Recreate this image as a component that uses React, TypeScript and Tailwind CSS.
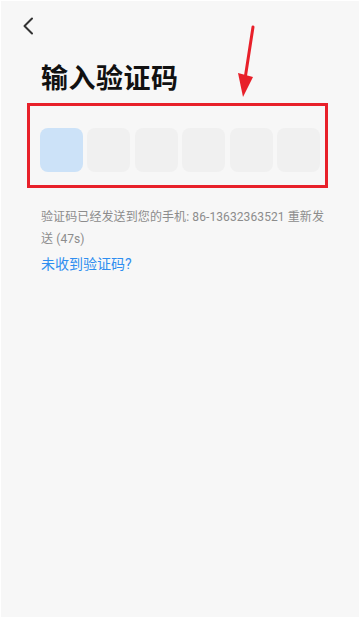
import React from "react";

export default function App() {
  const boxes = [0, 1, 2, 3, 4, 5];
  return (
    <div className="w-[360px] h-[618px] bg-white p-px" style={{ fontFamily: 'Roboto, "Noto Sans CJK SC", "Noto Sans", sans-serif' }}>
      <div className="relative w-full h-full bg-[#f7f7f7] overflow-hidden">
        <div className="h-[60px] pl-[21px] pt-[16px]">
          <svg width="12" height="18" viewBox="0 0 12 18" fill="none">
            <path d="M10 1.5 L2.5 9 L10 16.5" stroke="#333" strokeWidth="2" strokeLinecap="round" strokeLinejoin="round" />
          </svg>
        </div>
        <h1 className="ml-[40px] text-[27px] leading-[36px] font-bold text-[#111] tracking-[0.5px]">输入验证码</h1>
        <div className="ml-[26px] mt-[6px] w-[301px] h-[85px] border-[3px] border-[#e8202a] pl-[10px] pt-[22px]">
          <div className="flex gap-[4.4px]">
            {boxes.map((i) => (
              <div
                key={i}
                className={i === 0 ? "w-[43px] h-[44px] rounded-[8px] bg-[#cce2f8]" : "w-[43px] h-[44px] rounded-[8px] bg-[#f0f0f0]"}
              />
            ))}
          </div>
        </div>
        <p className="ml-[40px] w-[288px] mt-[18px] text-[12px] leading-[22px] text-[#8c8c8c] tracking-[0.1px]">
          验证码已经发送到您的手机: 86-13632363521 重新发送 (47s)
        </p>
        <p className="ml-[40px] mt-[4px] text-[14px] leading-[20px] text-[#2f8ef0]">未收到验证码?</p>
        <svg className="absolute left-[230px] top-[20px]" width="30" height="80" viewBox="0 0 30 80">
          <line x1="22" y1="6" x2="14" y2="58" stroke="#e8202a" strokeWidth="3" strokeLinecap="round" />
          <polygon points="7,52 22,56 12,76" fill="#e8202a" />
        </svg>
      </div>
    </div>
  );
}
